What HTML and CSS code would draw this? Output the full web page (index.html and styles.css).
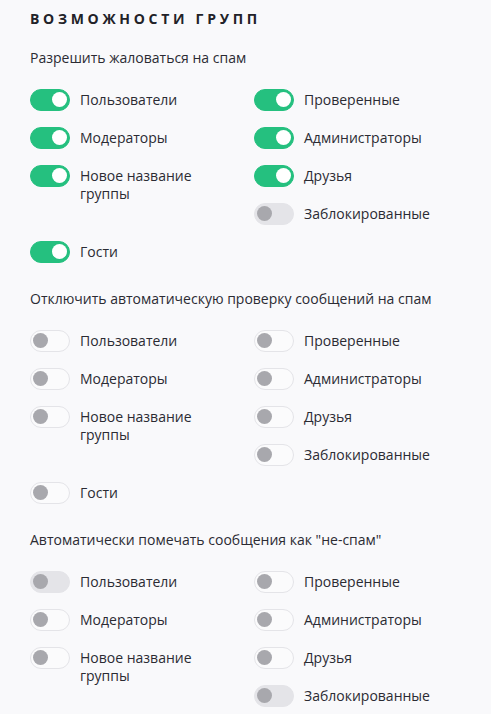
FILE: index.html
```html
<!DOCTYPE html>
<html lang="ru">
<head>
<meta charset="utf-8">
<link rel="stylesheet" href="styles.css">
</head>
<body>
<div class="page">
  <h1 class="title">Возможности групп</h1>

  <section class="block">
    <div class="label">Разрешить жаловаться на спам</div>
    <div class="grid">
      <div class="item"><span class="tg on"></span><span class="txt">Пользователи</span></div>
      <div class="item"><span class="tg on"></span><span class="txt">Проверенные</span></div>
      <div class="item"><span class="tg on"></span><span class="txt">Модераторы</span></div>
      <div class="item"><span class="tg on"></span><span class="txt">Администраторы</span></div>
      <div class="item tall"><span class="tg on"></span><span class="txt">Новое название группы</span></div>
      <div class="item"><span class="tg on"></span><span class="txt">Друзья</span></div>
      <div class="item right"><span class="tg dis"></span><span class="txt">Заблокированные</span></div>
      <div class="item"><span class="tg on"></span><span class="txt">Гости</span></div>
    </div>
  </section>

  <section class="block">
    <div class="label">Отключить автоматическую проверку сообщений на спам</div>
    <div class="grid">
      <div class="item"><span class="tg"></span><span class="txt">Пользователи</span></div>
      <div class="item"><span class="tg"></span><span class="txt">Проверенные</span></div>
      <div class="item"><span class="tg"></span><span class="txt">Модераторы</span></div>
      <div class="item"><span class="tg"></span><span class="txt">Администраторы</span></div>
      <div class="item tall"><span class="tg"></span><span class="txt">Новое название группы</span></div>
      <div class="item"><span class="tg"></span><span class="txt">Друзья</span></div>
      <div class="item right"><span class="tg"></span><span class="txt">Заблокированные</span></div>
      <div class="item"><span class="tg"></span><span class="txt">Гости</span></div>
    </div>
  </section>

  <section class="block">
    <div class="label">Автоматически помечать сообщения как "не-спам"</div>
    <div class="grid">
      <div class="item"><span class="tg dis"></span><span class="txt">Пользователи</span></div>
      <div class="item"><span class="tg"></span><span class="txt">Проверенные</span></div>
      <div class="item"><span class="tg"></span><span class="txt">Модераторы</span></div>
      <div class="item"><span class="tg"></span><span class="txt">Администраторы</span></div>
      <div class="item tall"><span class="tg"></span><span class="txt">Новое название группы</span></div>
      <div class="item"><span class="tg"></span><span class="txt">Друзья</span></div>
      <div class="item right"><span class="tg dis"></span><span class="txt">Заблокированные</span></div>
    </div>
  </section>
</div>
</body>
</html>
```

FILE: styles.css
```css
html, body {
  margin: 0;
  padding: 0;
  background: #f9f9fb;
  overflow: hidden;
}
.page {
  padding: 10px 30px 0 30px;
  font-family: "Open Sans", "Noto Sans", sans-serif;
  color: #2b2b33;
  font-size: 14px;
}
.title {
  margin: 0;
  font-size: 14px;
  font-weight: 700;
  letter-spacing: 3.7px;
  text-transform: uppercase;
  line-height: 18px;
  color: #222228;
}
.block {
  margin-top: 21px;
}
.block + .block {
  margin-top: 26px;
}
.label {
  line-height: 18px;
  margin-bottom: 21px;
}
.grid {
  display: grid;
  grid-template-columns: 224px 1fr;
  grid-auto-rows: 24px;
  row-gap: 14px;
}
.item {
  display: flex;
  align-items: flex-start;
  gap: 10px;
}
.item.tall {
  grid-row: span 2;
}
.item.right {
  grid-column: 2;
}
.txt {
  line-height: 18px;
  padding-top: 3px;
  width: 130px;
}
.tg {
  flex: none;
  position: relative;
  box-sizing: border-box;
  width: 40px;
  height: 22px;
  margin-top: 1px;
  border-radius: 11px;
  background: #fbfbfc;
  border: 1.5px solid #e4e4e8;
}
.tg::after {
  content: "";
  position: absolute;
  top: 2px;
  left: 2px;
  width: 15px;
  height: 15px;
  border-radius: 50%;
  background: #a8a8ad;
}
.tg.on {
  background: #25c07f;
  border-color: #25c07f;
}
.tg.on::after {
  left: auto;
  right: 2px;
  background: #ffffff;
}
.tg.dis {
  background: #e4e4e8;
  border-color: #e4e4e8;
}
```
